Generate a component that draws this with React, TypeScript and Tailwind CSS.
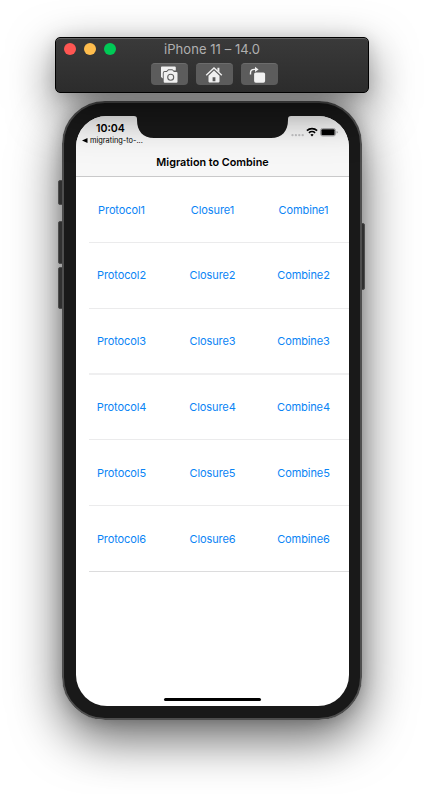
const rows = [
  { n: 1, box: 'h-[66px]', cells: '', line: 'h-px bg-[#ebebec]' },
  { n: 2, box: 'h-[66px]', cells: 'pb-px', line: 'h-px bg-[#ebebec]' },
  { n: 3, box: 'h-[66px]', cells: '', line: 'h-[2px] bg-[#efeff0]' },
  { n: 4, box: 'h-[65px]', cells: '', line: 'h-px bg-[#ebebec]' },
  { n: 5, box: 'h-[66px]', cells: '', line: 'h-px bg-[#ebebec]' },
  { n: 6, box: 'h-[66px]', cells: '', line: 'h-px bg-[#dcdcdd]' },
];
const kinds = ['Protocol', 'Closure', 'Combine'];

function CameraIcon() {
  return (
    <svg className="-ml-px" width="18" height="18" viewBox="0 0 18 18" fill="none">
      <path d="M1.8.6h13a1 1 0 0 1 1 1v2.9h-2L12.3 3.2H8.2L6.5 5H4.8a2 2 0 0 0-2 2v5.6L1 11V1.4A.8.8 0 0 1 1.8.6Z" fill="#f0f0f0" />
      <path d="M4.8 6h2.1l1.7-1.8h3.7L13.9 6h2.5a1.1 1.1 0 0 1 1.1 1.1v8.6a1.1 1.1 0 0 1-1.1 1.1H4.8a1.1 1.1 0 0 1-1.1-1.1V7.1A1.1 1.1 0 0 1 4.8 6Z" fill="#f0f0f0" />
      <circle cx="10.7" cy="11.3" r="3" stroke="#626262" strokeWidth="1.1" />
    </svg>
  );
}

function HomeIcon() {
  return (
    <svg className="-ml-px" width="18" height="18" viewBox="0 0 18 18" fill="none">
      <path d="M1.2 9.3 9 2l7.8 7.3" stroke="#f0f0f0" strokeWidth="1.4" />
      <path d="M12.4 1.8h2v4.7l-2-1.9Z" fill="#f0f0f0" />
      <path fillRule="evenodd" d="M9 4.6 14.5 9.8v5.8a.8.8 0 0 1-.8.8H4.3a.8.8 0 0 1-.8-.8V9.8L9 4.6ZM7.6 11.3v3.9h2.8v-3.9H7.6Z" fill="#f0f0f0" />
    </svg>
  );
}

function RotateIcon() {
  return (
    <svg className="-ml-[3px]" width="18" height="18" viewBox="0 0 18 18" fill="none">
      <path d="M1.5 8.6V6.9c0-2.3 1.5-3.5 3.8-3.5h1.2" stroke="#f0f0f0" strokeWidth="1.4" />
      <path d="M6 .8v5.1l3.6-2.5L6 .8Z" fill="#f0f0f0" />
      <rect x="5.1" y="6.4" width="11" height="10.4" rx="1.7" fill="#f0f0f0" />
    </svg>
  );
}

function ToolButton({ children }: { children: React.ReactNode }) {
  return (
    <button className="flex h-[22px] w-[37px] items-center justify-center rounded-[4px] border-t border-[#6c6c6c] bg-[#5c5c5c]">
      {children}
    </button>
  );
}

function TitleBar() {
  return (
    <header className="relative z-10 h-14 w-[314px] rounded-[5px] border border-black bg-gradient-to-b from-[#3a3a3a] to-[#2c2c2c] shadow-[inset_0_1px_0_#606060,0_16px_46px_rgba(0,0,0,0.55),0_2px_16px_rgba(0,0,0,0.12)]">
      <div className="grid h-[22px] grid-cols-[1fr_auto_1fr] items-center pl-2">
        <div className="flex gap-2">
          <span className="size-3 rounded-full bg-[#ff5652]" />
          <span className="size-3 rounded-full bg-[#ffbd4d]" />
          <span className="size-3 rounded-full bg-[#00ca56]" />
        </div>
        <h1 className="-ml-[8px] text-[13px] leading-5 tracking-[0.05px] text-[#b0b0b0]">iPhone 11 – 14.0</h1>
        <span />
      </div>
      <div className="flex gap-2 pl-[95px] pt-[3px]">
        <ToolButton><CameraIcon /></ToolButton>
        <ToolButton><HomeIcon /></ToolButton>
        <ToolButton><RotateIcon /></ToolButton>
      </div>
    </header>
  );
}

function StatusIcons() {
  return (
    <svg className="absolute left-[215px] top-[10px]" width="48" height="13" viewBox="0 0 48 13" fill="none">
      {[1.5, 4.9, 8.3, 11.7].map((x) => (
        <circle key={x} cx={x} cy="9.2" r="1.15" fill="#c3c3c5" />
      ))}
      <path d="M15.9 4.7a7.3 7.3 0 0 1 10.2 0" stroke="#000" strokeWidth="1.7" />
      <path d="M17.9 6.9a4.4 4.4 0 0 1 6.2 0" stroke="#000" strokeWidth="1.5" />
      <path d="m19.4 8.7 1.6 1.7 1.6-1.7a2.3 2.3 0 0 0-3.2 0Z" fill="#000" />
      <rect x="29.5" y="2.5" width="15" height="7.5" rx="2" stroke="#acacae" />
      <rect x="30.4" y="3.3" width="13.2" height="5.9" rx="1" fill="#000" />
      <path d="M45.7 5v2.6c1.3-.4 1.3-2.2 0-2.6Z" fill="#8c8c8e" />
    </svg>
  );
}

function Screen() {
  return (
    <main className="relative flex h-[590px] w-[273px] flex-col overflow-hidden rounded-[31px] bg-white">
      <div className="h-[61px] shrink-0 border-b border-[#c9c9ca] bg-[#f7f7f7]">
        <div className="h-[18px] pl-5 pt-[5px] text-[10.6px] font-semibold leading-[15px] text-black">10:04</div>
        <div className="flex h-[13px] items-center gap-[2px] pl-[6px] text-[7.4px] leading-[13px] text-black">
          <svg width="6" height="5" viewBox="0 0 6 5"><path d="M0 2.5 5.5 0v5Z" /></svg>
          <span>migrating-to-...</span>
        </div>
        <h2 className="pt-2 text-center text-[10.8px] font-semibold leading-4 text-black">Migration to Combine</h2>
      </div>
      <svg className="absolute left-[58px] top-0" width="157" height="22" viewBox="0 0 157 22">
        <path d="M0 0h157c-2 0-3 1-3 3v1c0 11-6 18-17 18H20C9 22 3 15 3 4V3c0-2-1-3-3-3Z" fill="#191919" />
      </svg>
      <StatusIcons />
      <div className="flex flex-col">
        {rows.map(({ n, box, cells, line }) => (
          <div key={n} className={`flex flex-col ${box}`}>
            <div className={`grid flex-1 grid-cols-3 items-center ${cells}`}>
              {kinds.map((kind) => (
                <button key={kind} className="text-center text-[11px] leading-4 tracking-[-0.1px] text-[#0a84f5]">{kind}{n}</button>
              ))}
            </div>
            <div className={`ml-[13px] ${line}`} />
          </div>
        ))}
      </div>
      <div className="mx-auto mb-[5px] mt-auto h-[3px] w-[97px] rounded-full bg-black" />
    </main>
  );
}

function SideButton({ place }: { place: string }) {
  return <span className={`absolute rounded-[2px] border border-[#4d4d4d] bg-[#303030] ${place}`} />;
}

export default function App() {
  return (
    <div className="flex h-[794px] w-[424px] flex-col items-center overflow-hidden bg-white pt-[37px] font-['Inter','Liberation_Sans',sans-serif]">
      <TitleBar />
      <div className="relative mt-2 h-[619px] w-[300px]">
        <div className="absolute inset-0 rounded-[43px] shadow-[0_18px_50px_rgba(0,0,0,0.62),0_0_16px_rgba(0,0,0,0.18)]" />
        <SideButton place="-left-1 top-[79px] h-[25px] w-[6px]" />
        <SideButton place="-left-1 top-[120px] h-[43px] w-[6px]" />
        <SideButton place="-left-1 top-[166px] h-[42px] w-[6px]" />
        <SideButton place="-right-[3px] top-[122px] h-[67px] w-[6px]" />
        <div className="relative h-full rounded-[43px] border-2 border-[#4e4e4e] bg-[#191919] pl-3 pt-[13px]">
          <Screen />
        </div>
      </div>
    </div>
  );
}
